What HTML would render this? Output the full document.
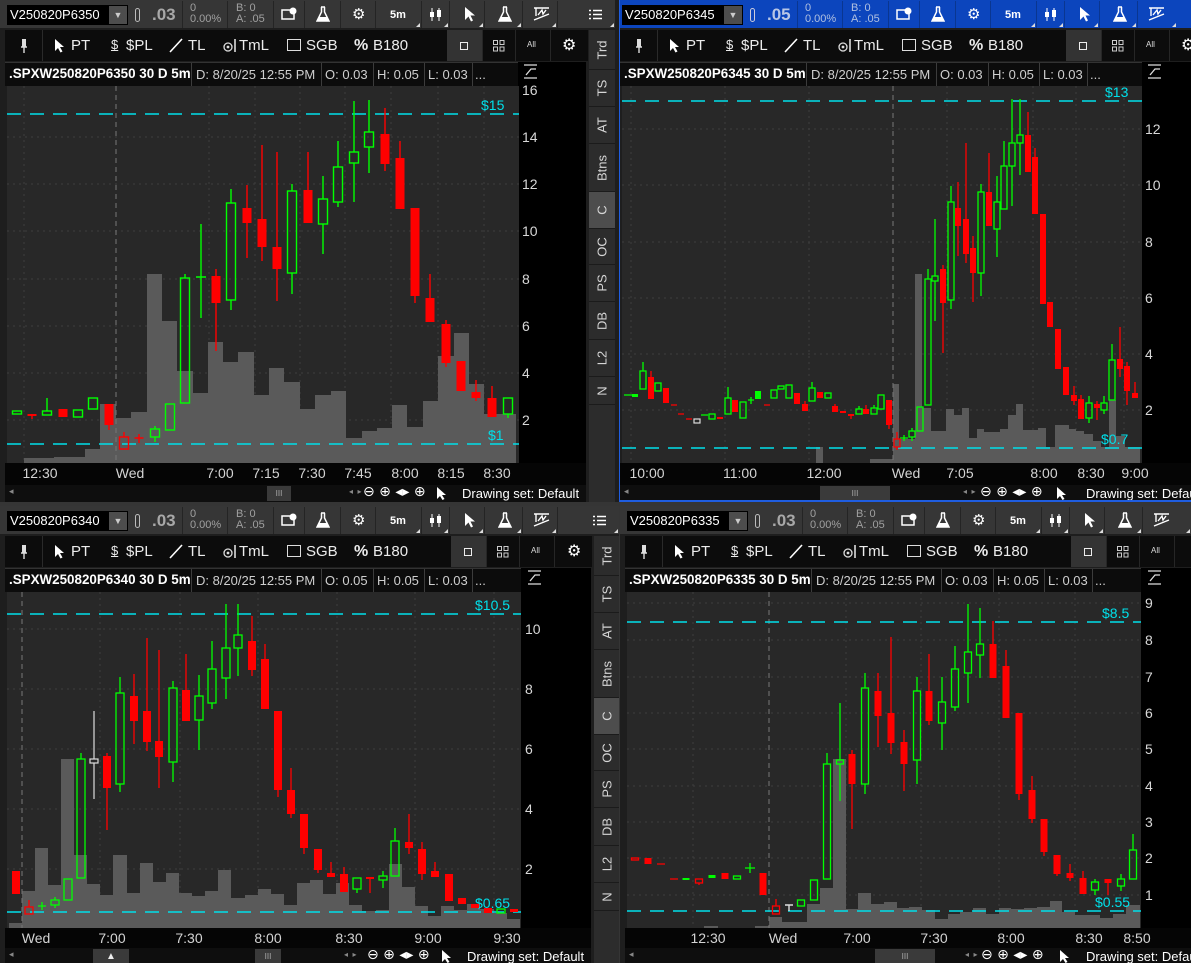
<!DOCTYPE html>
<html><head><meta charset="utf-8">
<style>
*{box-sizing:border-box}
body{margin:0;width:1191px;height:963px;background:#353535;position:relative;overflow:hidden;font-family:"Liberation Sans",sans-serif}
.pn{position:absolute;overflow:hidden}
.r1{position:absolute;left:0;top:0;height:28px;right:0;background:#363636}
.blue .r1{background:#0c45bd}
.cell{position:absolute;top:1px;height:27px;border-left:1px solid #242424}
.blue .cell{border-left-color:#0a3690}
.tri{position:absolute;right:1px;bottom:1px;width:0;height:0;border-left:4px solid transparent;border-bottom:4px solid #ddd}
.sym{position:absolute;left:7px;top:5px;width:121px;height:20px;background:#000;color:#fff;font-size:13px;line-height:20px;padding-left:3px}
.dd{position:absolute;left:102px;top:1px;width:18px;height:18px;background:#4d4d4d;color:#ccc;font-size:9px;text-align:center;line-height:18px}
.big{position:absolute;left:152px;top:5px;color:#a8a8a8;font-weight:bold;font-size:17px}
.blue .big{color:#b8c6e6}
.sm{position:absolute;color:#a0a0a0;font-size:11px;line-height:11px}
.blue .sm{color:#b0c0e0}
.ic{position:absolute;top:6px}
.t5{position:absolute;left:389px;top:8px;color:#fff;font-size:11px;font-weight:bold}
.r2{position:absolute;left:5px;top:30px;height:31px;background:#0c0c0c;color:#ececec;font-size:15px}
.r2 .tx{position:absolute;top:7px}
.hd{position:absolute;left:5px;top:62px;height:24px;background:#0c0c0c;color:#cfcfcf;font-size:13px;border-top:1px solid #333}
.hd span{position:absolute;top:4px;white-space:nowrap}
.hd .b{color:#fff;font-weight:bold;font-size:13.4px;top:3px}
.vd{position:absolute;top:0;width:1px;height:24px;background:#3c3c3c}
.pa{position:absolute;top:86px;background:#000}
.ta{position:absolute;background:#050505;color:#d4d4d4;font-size:14px}
.ta span{position:absolute;top:2px;transform:translateX(-50%);white-space:nowrap}
.sc{position:absolute;background:#0e0e0e;color:#fff;font-size:13px}
.th{position:absolute;top:1px;height:15px;background:#3a3a3a;color:#aaa;font-size:8px;text-align:center;line-height:15px}
.sb{position:absolute;background:#2c2c2c}
.tab{position:absolute;left:0;width:100%;border-bottom:1px solid #1b1b1b;color:#d6d6d6;font-size:13px}
.tab span{position:absolute;left:50%;top:50%;transform:translate(-50%,-50%) rotate(-90deg);white-space:nowrap}
.tab.on{background:#4d4d4d}
.dj{font-family:"DejaVu Sans",sans-serif}
</style></head><body>

<!-- ============ PANEL TOP-LEFT ============ -->
<div class="pn" style="left:0;top:0;width:615px;height:502px;background:#1e1e1e">
 <div class="r1">
  <div class="sym">V250820P6350<div class="dd">▼</div></div>
  <svg class="ic" style="left:134px;top:8px" width="8" height="14"><rect x="1.5" y="0.5" width="4" height="13" rx="2" fill="none" stroke="#bbb"/></svg>
  <div class="big">.03</div>
  <div class="cell" style="left:182px;width:45px"><div class="sm" style="left:7px;top:2px">0<br>0.00%</div></div>
  <div class="cell" style="left:227px;width:46px"><div class="sm" style="left:8px;top:2px">B: 0<br>A: .05</div></div>
  <div class="cell" style="left:273px;width:31px"><svg class="ic" style="left:7px" width="16" height="14"><rect x="1" y="3" width="12" height="9" fill="none" stroke="#fff" stroke-width="1.5"/><circle cx="12" cy="4" r="3.5" fill="#fff"/></svg></div>
  <div class="cell" style="left:304px;width:36px"><svg class="ic" style="left:11px;top:5px" width="14" height="17"><path d="M5 1H9M5.5 1V6L1 15H13L8.5 6V1" fill="none" stroke="#fff" stroke-width="1.5"/><path d="M3 11H11L13 15H1Z" fill="#fff"/></svg></div>
  <div class="cell" style="left:340px;width:35px"><span class="ic dj" style="left:11px;top:4px;color:#fff;font-size:15px">⚙</span></div>
  <div class="cell" style="left:375px;width:46px"><span class="t5" style="left:14px">5m</span><div class="tri"></div></div>
  <div class="cell" style="left:421px;width:28px"><svg class="ic" style="left:6px" width="16" height="15"><path d="M4 1V14M11 1V14" stroke="#fff"/><rect x="2" y="5" width="4" height="5" fill="#fff"/><rect x="9" y="3" width="4" height="7" fill="#fff"/></svg><div class="tri"></div></div>
  <div class="cell" style="left:449px;width:35px"><svg class="ic" style="left:14px;top:5px" width="12" height="16"><path d="M1 1V14L4.5 10.5L7 15.5L9 14.5L6.5 9.5H11Z" fill="#fff"/></svg><div class="tri"></div></div>
  <div class="cell" style="left:484px;width:38px"><svg class="ic" style="left:13px;top:5px" width="14" height="17"><path d="M5 1H9M5.5 1V6L1 15H13L8.5 6V1" fill="none" stroke="#fff" stroke-width="1.5"/><path d="M3 11H11L13 15H1Z" fill="#fff"/></svg><div class="tri"></div></div>
  <div class="cell" style="left:522px;width:35px"><svg class="ic" style="left:10px;top:5px" width="18" height="16"><path d="M1 2H16M3 2V10M1 14L16 8M5 9L9 4L10 8L13 4" fill="none" stroke="#fff" stroke-width="1.4"/></svg><div class="tri"></div></div>
  <div class="cell" style="left:557px;width:58px"><svg class="ic" style="left:31px;top:8px" width="14" height="11"><path d="M4 1.5H13M4 5.5H13M4 9.5H13" stroke="#fff" stroke-width="1.4"/><path d="M0 1.5H2M0 5.5H2M0 9.5H2" stroke="#fff" stroke-width="1.4"/></svg><div class="tri"></div></div>
 </div>
 <div class="r2" style="width:583px">
  <div class="vd" style="left:37px;height:31px;background:#2a2a2a"></div>
  <svg style="position:absolute;left:15px;top:8px" width="8" height="16"><rect x="2" y="1" width="4" height="8" fill="#ddd"/><path d="M1 9H7M4 9V15" stroke="#ddd" stroke-width="1.4"/></svg>
  <svg style="position:absolute;left:49px;top:8px" width="11" height="15"><path d="M1 1V13L4 10L6.5 14.5L8.5 13.5L6 9H10Z" fill="#fff"/></svg><span class="tx" style="left:66px">PT</span>
  <span class="tx" style="left:106px;font-size:13px;text-decoration:underline">$</span><span class="tx" style="left:121px">$PL</span>
  <svg style="position:absolute;left:164px;top:8px" width="14" height="15"><path d="M1 14L13 1" stroke="#fff" stroke-width="1.6"/></svg><span class="tx" style="left:183px">TL</span>
  <svg style="position:absolute;left:218px;top:8px" width="14" height="15"><circle cx="5" cy="9" r="4" fill="none" stroke="#ddd" stroke-width="1.3"/><circle cx="5" cy="9" r="1.4" fill="#ddd"/><path d="M12 1V14" stroke="#ddd" stroke-width="1.6"/></svg><span class="tx" style="left:234px">TmL</span>
  <svg style="position:absolute;left:282px;top:9px" width="14" height="12"><rect x="0.5" y="0.5" width="13" height="11" fill="none" stroke="#ddd"/></svg><span class="tx" style="left:301px">SGB</span>
  <span class="tx" style="left:349px;font-weight:bold;font-size:16px">%</span><span class="tx" style="left:368px">B180</span>
  <div style="position:absolute;left:442px;top:0;width:35px;height:31px;background:#333"><div style="position:absolute;left:13px;top:12px;width:8px;height:8px;border:1px solid #eee"></div></div>
  <div class="vd" style="left:477px;height:31px;background:#262626"></div>
  <svg style="position:absolute;left:488px;top:10px" width="12" height="12"><rect x="0.5" y="0.5" width="4" height="4" fill="none" stroke="#ccc"/><rect x="7" y="0.5" width="4" height="4" fill="none" stroke="#ccc"/><rect x="0.5" y="7" width="4" height="4" fill="none" stroke="#ccc"/><rect x="7" y="7" width="4" height="4" fill="none" stroke="#ccc"/></svg>
  <div class="vd" style="left:510px;height:31px;background:#262626"></div>
  <span style="position:absolute;left:522px;top:10px;font-size:8px;color:#ddd">All</span>
  <div class="vd" style="left:545px;height:31px;background:#262626"></div>
  <span class="dj" style="position:absolute;left:557px;top:5px;font-size:16px;color:#fff">⚙</span>
 </div>
 <div class="hd" style="width:513px">
  <span class="b" style="left:4px">.SPXW250820P6350 30 D 5m</span><div class="vd" style="left:186px"></div>
  <span style="left:191px">D: 8/20/25 12:55 PM</span><div class="vd" style="left:316px"></div>
  <span style="left:320px">O: 0.03</span><div class="vd" style="left:368px"></div>
  <span style="left:372px">H: 0.05</span><div class="vd" style="left:419px"></div>
  <span style="left:423px">L: 0.03</span><div class="vd" style="left:467px"></div>
  <span style="left:470px">...</span>
 </div>
 <div style="position:absolute;left:518px;top:62px;width:68px;height:24px;background:#000"><svg style="position:absolute;left:5px;top:2px" width="16" height="16"><path d="M1 14H14M1 1H14M3 11L8 5L13 5" fill="none" stroke="#ddd" stroke-width="1.3"/></svg></div>
 <div class="pa" style="left:519px;width:67px;height:377px"></div>
 <div class="ta" style="left:5px;top:463px;width:581px;height:22px"><span style="left:35px">12:30</span><span style="left:125px">Wed</span><span style="left:215px">7:00</span><span style="left:261px">7:15</span><span style="left:307px">7:30</span><span style="left:353px">7:45</span><span style="left:400px">8:00</span><span style="left:446px">8:15</span><span style="left:492px">8:30</span></div>
 <div class="sc" style="left:5px;top:485px;width:581px;height:17px">
  <span style="position:absolute;left:4px;top:1px;color:#888;font-size:9px">◂</span>
  <div class="th" style="left:262px;width:24px">III</div>
  <span style="position:absolute;left:344px;top:2px;color:#888;font-size:8px">◂&nbsp;&nbsp;▸</span>
  <span class="dj" style="position:absolute;left:358px;top:-1px;font-size:14px">⊖ ⊕ ◂▸ ⊕</span>
  <svg style="position:absolute;left:431px;top:1px" width="11" height="14"><path d="M1 1V13L4 10L6.5 14L8.5 13L6 9H10Z" fill="#fff"/></svg>
  <span style="position:absolute;left:457px;top:1px">Drawing set: Default</span>
 </div>
 <div class="sb" style="left:589px;top:30px;width:26px;height:472px">
  <div class="tab" style="top:0;height:40px"><span>Trd</span></div>
  <div class="tab" style="top:40px;height:37px"><span>TS</span></div>
  <div class="tab" style="top:77px;height:37px"><span>AT</span></div>
  <div class="tab" style="top:114px;height:48px"><span>Btns</span></div>
  <div class="tab on" style="top:162px;height:37px"><span>C</span></div>
  <div class="tab" style="top:199px;height:36px"><span>OC</span></div>
  <div class="tab" style="top:235px;height:37px"><span>PS</span></div>
  <div class="tab" style="top:272px;height:38px"><span>DB</span></div>
  <div class="tab" style="top:310px;height:37px"><span>L2</span></div>
  <div class="tab" style="top:347px;height:28px"><span>N</span></div>
 </div>
</div>

<!-- ============ PANEL TOP-RIGHT ============ -->
<div class="pn blue" style="left:615px;top:0;width:576px;height:502px;background:#1e1e1e">
 <div class="r1" style="left:4px">
  <div class="sym" style="left:3px">V250820P6345<div class="dd">▼</div></div>
  <svg class="ic" style="left:130px;top:8px" width="8" height="14"><rect x="1.5" y="0.5" width="4" height="13" rx="2" fill="none" stroke="#ccd"/></svg>
  <div class="big" style="left:148px">.05</div>
  <div class="cell" style="left:178px;width:45px"><div class="sm" style="left:7px;top:2px">0<br>0.00%</div></div>
  <div class="cell" style="left:223px;width:46px"><div class="sm" style="left:8px;top:2px">B: 0<br>A: .05</div></div>
  <div class="cell" style="left:269px;width:31px"><svg class="ic" style="left:7px" width="16" height="14"><rect x="1" y="3" width="12" height="9" fill="none" stroke="#fff" stroke-width="1.5"/><circle cx="12" cy="4" r="3.5" fill="#fff"/></svg></div>
  <div class="cell" style="left:300px;width:36px"><svg class="ic" style="left:11px;top:5px" width="14" height="17"><path d="M5 1H9M5.5 1V6L1 15H13L8.5 6V1" fill="none" stroke="#fff" stroke-width="1.5"/><path d="M3 11H11L13 15H1Z" fill="#fff"/></svg></div>
  <div class="cell" style="left:336px;width:35px"><span class="ic dj" style="left:11px;top:4px;color:#fff;font-size:15px">⚙</span></div>
  <div class="cell" style="left:371px;width:46px"><span class="t5" style="left:14px">5m</span><div class="tri"></div></div>
  <div class="cell" style="left:417px;width:28px"><svg class="ic" style="left:6px" width="16" height="15"><path d="M4 1V14M11 1V14" stroke="#fff"/><rect x="2" y="5" width="4" height="5" fill="#fff"/><rect x="9" y="3" width="4" height="7" fill="#fff"/></svg><div class="tri"></div></div>
  <div class="cell" style="left:445px;width:35px"><svg class="ic" style="left:14px;top:5px" width="12" height="16"><path d="M1 1V14L4.5 10.5L7 15.5L9 14.5L6.5 9.5H11Z" fill="#fff"/></svg><div class="tri"></div></div>
  <div class="cell" style="left:480px;width:38px"><svg class="ic" style="left:13px;top:5px" width="14" height="17"><path d="M5 1H9M5.5 1V6L1 15H13L8.5 6V1" fill="none" stroke="#fff" stroke-width="1.5"/><path d="M3 11H11L13 15H1Z" fill="#fff"/></svg><div class="tri"></div></div>
  <div class="cell" style="left:518px;width:40px"><svg class="ic" style="left:10px;top:5px" width="18" height="16"><path d="M1 2H16M3 2V10M1 14L16 8M5 9L9 4L10 8L13 4" fill="none" stroke="#fff" stroke-width="1.4"/></svg><div class="tri"></div></div>
 </div>
 <div class="r2" style="left:5px;width:571px">
  <div class="vd" style="left:37px;height:31px;background:#2a2a2a"></div>
  <svg style="position:absolute;left:15px;top:8px" width="8" height="16"><rect x="2" y="1" width="4" height="8" fill="#ddd"/><path d="M1 9H7M4 9V15" stroke="#ddd" stroke-width="1.4"/></svg>
  <svg style="position:absolute;left:49px;top:8px" width="11" height="15"><path d="M1 1V13L4 10L6.5 14.5L8.5 13.5L6 9H10Z" fill="#fff"/></svg><span class="tx" style="left:66px">PT</span>
  <span class="tx" style="left:106px;font-size:13px;text-decoration:underline">$</span><span class="tx" style="left:121px">$PL</span>
  <svg style="position:absolute;left:164px;top:8px" width="14" height="15"><path d="M1 14L13 1" stroke="#fff" stroke-width="1.6"/></svg><span class="tx" style="left:183px">TL</span>
  <svg style="position:absolute;left:218px;top:8px" width="14" height="15"><circle cx="5" cy="9" r="4" fill="none" stroke="#ddd" stroke-width="1.3"/><circle cx="5" cy="9" r="1.4" fill="#ddd"/><path d="M12 1V14" stroke="#ddd" stroke-width="1.6"/></svg><span class="tx" style="left:234px">TmL</span>
  <svg style="position:absolute;left:282px;top:9px" width="14" height="12"><rect x="0.5" y="0.5" width="13" height="11" fill="none" stroke="#ddd"/></svg><span class="tx" style="left:301px">SGB</span>
  <span class="tx" style="left:349px;font-weight:bold;font-size:16px">%</span><span class="tx" style="left:368px">B180</span>
  <div style="position:absolute;left:446px;top:0;width:35px;height:31px;background:#333"><div style="position:absolute;left:13px;top:12px;width:8px;height:8px;border:1px solid #eee"></div></div>
  <div class="vd" style="left:481px;height:31px;background:#262626"></div>
  <svg style="position:absolute;left:492px;top:10px" width="12" height="12"><rect x="0.5" y="0.5" width="4" height="4" fill="none" stroke="#ccc"/><rect x="7" y="0.5" width="4" height="4" fill="none" stroke="#ccc"/><rect x="0.5" y="7" width="4" height="4" fill="none" stroke="#ccc"/><rect x="7" y="7" width="4" height="4" fill="none" stroke="#ccc"/></svg>
  <div class="vd" style="left:514px;height:31px;background:#262626"></div>
  <span style="position:absolute;left:526px;top:10px;font-size:8px;color:#ddd">All</span>
  <div class="vd" style="left:549px;height:31px;background:#262626"></div>
  <span class="dj" style="position:absolute;left:561px;top:5px;font-size:16px;color:#fff">⚙</span>
 </div>
 <div class="hd" style="width:522px">
  <span class="b" style="left:4px">.SPXW250820P6345 30 D 5m</span><div class="vd" style="left:186px"></div>
  <span style="left:191px">D: 8/20/25 12:55 PM</span><div class="vd" style="left:316px"></div>
  <span style="left:320px">O: 0.03</span><div class="vd" style="left:368px"></div>
  <span style="left:372px">H: 0.05</span><div class="vd" style="left:419px"></div>
  <span style="left:423px">L: 0.03</span><div class="vd" style="left:467px"></div>
  <span style="left:470px">...</span>
 </div>
 <div style="position:absolute;left:527px;top:62px;width:49px;height:24px;background:#000"><svg style="position:absolute;left:5px;top:2px" width="16" height="16"><path d="M1 14H14M1 1H14M3 11L8 5L13 5" fill="none" stroke="#ddd" stroke-width="1.3"/></svg></div>
 <div class="pa" style="left:527px;width:49px;height:377px"></div>
 <div class="ta" style="left:5px;top:463px;width:571px;height:22px"><span style="left:27px">10:00</span><span style="left:120px">11:00</span><span style="left:204px">12:00</span><span style="left:286px">Wed</span><span style="left:340px">7:05</span><span style="left:424px">8:00</span><span style="left:471px">8:30</span><span style="left:515px">9:00</span></div>
 <div class="sc" style="left:5px;top:485px;width:571px;height:15px">
  <span style="position:absolute;left:4px;top:1px;color:#888;font-size:9px">◂</span>
  <div class="th" style="left:200px;width:70px">III</div>
  <span style="position:absolute;left:343px;top:2px;color:#888;font-size:8px">◂&nbsp;&nbsp;▸</span>
  <span class="dj" style="position:absolute;left:360px;top:-1px;font-size:14px">⊖ ⊕ ◂▸ ⊕</span>
  <svg style="position:absolute;left:436px;top:1px" width="11" height="14"><path d="M1 1V13L4 10L6.5 14L8.5 13L6 9H10Z" fill="#fff"/></svg>
  <span style="position:absolute;left:466px;top:1px;white-space:nowrap">Drawing set: Default</span>
 </div>
 <div style="position:absolute;left:4px;top:0;width:1px;height:502px;background:#1f5de0"></div>
 <div style="position:absolute;left:4px;top:500px;width:572px;height:2px;background:#1f5de0"></div>
</div>

<!-- ============ PANEL BOTTOM-LEFT ============ -->
<div class="pn" style="left:0;top:506px;width:619px;height:457px;background:#1e1e1e">
 <div class="r1">
  <div class="sym">V250820P6340<div class="dd">▼</div></div>
  <svg class="ic" style="left:134px;top:8px" width="8" height="14"><rect x="1.5" y="0.5" width="4" height="13" rx="2" fill="none" stroke="#bbb"/></svg>
  <div class="big">.03</div>
  <div class="cell" style="left:182px;width:45px"><div class="sm" style="left:7px;top:2px">0<br>0.00%</div></div>
  <div class="cell" style="left:227px;width:46px"><div class="sm" style="left:8px;top:2px">B: 0<br>A: .05</div></div>
  <div class="cell" style="left:273px;width:31px"><svg class="ic" style="left:7px" width="16" height="14"><rect x="1" y="3" width="12" height="9" fill="none" stroke="#fff" stroke-width="1.5"/><circle cx="12" cy="4" r="3.5" fill="#fff"/></svg></div>
  <div class="cell" style="left:304px;width:36px"><svg class="ic" style="left:11px;top:5px" width="14" height="17"><path d="M5 1H9M5.5 1V6L1 15H13L8.5 6V1" fill="none" stroke="#fff" stroke-width="1.5"/><path d="M3 11H11L13 15H1Z" fill="#fff"/></svg></div>
  <div class="cell" style="left:340px;width:35px"><span class="ic dj" style="left:11px;top:4px;color:#fff;font-size:15px">⚙</span></div>
  <div class="cell" style="left:375px;width:46px"><span class="t5" style="left:14px">5m</span><div class="tri"></div></div>
  <div class="cell" style="left:421px;width:28px"><svg class="ic" style="left:6px" width="16" height="15"><path d="M4 1V14M11 1V14" stroke="#fff"/><rect x="2" y="5" width="4" height="5" fill="#fff"/><rect x="9" y="3" width="4" height="7" fill="#fff"/></svg><div class="tri"></div></div>
  <div class="cell" style="left:449px;width:35px"><svg class="ic" style="left:14px;top:5px" width="12" height="16"><path d="M1 1V14L4.5 10.5L7 15.5L9 14.5L6.5 9.5H11Z" fill="#fff"/></svg><div class="tri"></div></div>
  <div class="cell" style="left:484px;width:38px"><svg class="ic" style="left:13px;top:5px" width="14" height="17"><path d="M5 1H9M5.5 1V6L1 15H13L8.5 6V1" fill="none" stroke="#fff" stroke-width="1.5"/><path d="M3 11H11L13 15H1Z" fill="#fff"/></svg><div class="tri"></div></div>
  <div class="cell" style="left:522px;width:35px"><svg class="ic" style="left:10px;top:5px" width="18" height="16"><path d="M1 2H16M3 2V10M1 14L16 8M5 9L9 4L10 8L13 4" fill="none" stroke="#fff" stroke-width="1.4"/></svg><div class="tri"></div></div>
  <div class="cell" style="left:557px;width:62px"><svg class="ic" style="left:35px;top:8px" width="14" height="11"><path d="M4 1.5H13M4 5.5H13M4 9.5H13" stroke="#fff" stroke-width="1.4"/><path d="M0 1.5H2M0 5.5H2M0 9.5H2" stroke="#fff" stroke-width="1.4"/></svg><div class="tri"></div></div>
 </div>
 <div class="r2" style="width:587px">
  <div class="vd" style="left:37px;height:31px;background:#2a2a2a"></div>
  <svg style="position:absolute;left:15px;top:8px" width="8" height="16"><rect x="2" y="1" width="4" height="8" fill="#ddd"/><path d="M1 9H7M4 9V15" stroke="#ddd" stroke-width="1.4"/></svg>
  <svg style="position:absolute;left:49px;top:8px" width="11" height="15"><path d="M1 1V13L4 10L6.5 14.5L8.5 13.5L6 9H10Z" fill="#fff"/></svg><span class="tx" style="left:66px">PT</span>
  <span class="tx" style="left:106px;font-size:13px;text-decoration:underline">$</span><span class="tx" style="left:121px">$PL</span>
  <svg style="position:absolute;left:164px;top:8px" width="14" height="15"><path d="M1 14L13 1" stroke="#fff" stroke-width="1.6"/></svg><span class="tx" style="left:183px">TL</span>
  <svg style="position:absolute;left:218px;top:8px" width="14" height="15"><circle cx="5" cy="9" r="4" fill="none" stroke="#ddd" stroke-width="1.3"/><circle cx="5" cy="9" r="1.4" fill="#ddd"/><path d="M12 1V14" stroke="#ddd" stroke-width="1.6"/></svg><span class="tx" style="left:234px">TmL</span>
  <svg style="position:absolute;left:282px;top:9px" width="14" height="12"><rect x="0.5" y="0.5" width="13" height="11" fill="none" stroke="#ddd"/></svg><span class="tx" style="left:301px">SGB</span>
  <span class="tx" style="left:349px;font-weight:bold;font-size:16px">%</span><span class="tx" style="left:368px">B180</span>
  <div style="position:absolute;left:446px;top:0;width:35px;height:31px;background:#333"><div style="position:absolute;left:13px;top:12px;width:8px;height:8px;border:1px solid #eee"></div></div>
  <div class="vd" style="left:481px;height:31px;background:#262626"></div>
  <svg style="position:absolute;left:492px;top:10px" width="12" height="12"><rect x="0.5" y="0.5" width="4" height="4" fill="none" stroke="#ccc"/><rect x="7" y="0.5" width="4" height="4" fill="none" stroke="#ccc"/><rect x="0.5" y="7" width="4" height="4" fill="none" stroke="#ccc"/><rect x="7" y="7" width="4" height="4" fill="none" stroke="#ccc"/></svg>
  <div class="vd" style="left:514px;height:31px;background:#262626"></div>
  <span style="position:absolute;left:526px;top:10px;font-size:8px;color:#ddd">All</span>
  <div class="vd" style="left:549px;height:31px;background:#262626"></div>
  <span class="dj" style="position:absolute;left:562px;top:5px;font-size:16px;color:#fff">⚙</span>
 </div>
 <div class="hd" style="width:516px">
  <span class="b" style="left:4px">.SPXW250820P6340 30 D 5m</span><div class="vd" style="left:186px"></div>
  <span style="left:191px">D: 8/20/25 12:55 PM</span><div class="vd" style="left:316px"></div>
  <span style="left:320px">O: 0.05</span><div class="vd" style="left:368px"></div>
  <span style="left:372px">H: 0.05</span><div class="vd" style="left:419px"></div>
  <span style="left:423px">L: 0.03</span><div class="vd" style="left:467px"></div>
  <span style="left:470px">...</span>
 </div>
 <div style="position:absolute;left:521px;top:62px;width:70px;height:24px;background:#000"><svg style="position:absolute;left:6px;top:2px" width="16" height="16"><path d="M1 14H14M1 1H14M3 11L8 5L13 5" fill="none" stroke="#ddd" stroke-width="1.3"/></svg></div>
 <div class="pa" style="left:521px;width:70px;height:336px"></div>
 <div class="ta" style="left:5px;top:422px;width:586px;height:20px"><span style="left:31px">Wed</span><span style="left:107px">7:00</span><span style="left:184px">7:30</span><span style="left:263px">8:00</span><span style="left:344px">8:30</span><span style="left:423px">9:00</span><span style="left:502px">9:30</span></div>
 <div class="sc" style="left:5px;top:442px;width:586px;height:15px">
  <span style="position:absolute;left:4px;top:1px;color:#888;font-size:9px">◂</span>
  <div class="th" style="left:88px;width:36px;font-size:10px;color:#eee">▲</div>
  <div class="th" style="left:250px;width:26px">III</div>
  <span style="position:absolute;left:339px;top:2px;color:#888;font-size:8px">◂&nbsp;&nbsp;▸</span>
  <span class="dj" style="position:absolute;left:362px;top:-1px;font-size:14px">⊖ ⊕ ◂▸ ⊕</span>
  <svg style="position:absolute;left:436px;top:1px" width="11" height="14"><path d="M1 1V13L4 10L6.5 14L8.5 13L6 9H10Z" fill="#fff"/></svg>
  <span style="position:absolute;left:462px;top:1px">Drawing set: Default</span>
 </div>
 <div class="sb" style="left:594px;top:30px;width:25px;height:427px">
  <div class="tab" style="top:0;height:40px"><span>Trd</span></div>
  <div class="tab" style="top:40px;height:37px"><span>TS</span></div>
  <div class="tab" style="top:77px;height:37px"><span>AT</span></div>
  <div class="tab" style="top:114px;height:48px"><span>Btns</span></div>
  <div class="tab on" style="top:162px;height:37px"><span>C</span></div>
  <div class="tab" style="top:199px;height:36px"><span>OC</span></div>
  <div class="tab" style="top:235px;height:37px"><span>PS</span></div>
  <div class="tab" style="top:272px;height:38px"><span>DB</span></div>
  <div class="tab" style="top:310px;height:37px"><span>L2</span></div>
  <div class="tab" style="top:347px;height:28px"><span>N</span></div>
 </div>
</div>

<!-- ============ PANEL BOTTOM-RIGHT ============ -->
<div class="pn" style="left:620px;top:506px;width:571px;height:457px;background:#1e1e1e">
 <div class="r1">
  <div class="sym">V250820P6335<div class="dd">▼</div></div>
  <svg class="ic" style="left:134px;top:8px" width="8" height="14"><rect x="1.5" y="0.5" width="4" height="13" rx="2" fill="none" stroke="#bbb"/></svg>
  <div class="big">.03</div>
  <div class="cell" style="left:182px;width:45px"><div class="sm" style="left:7px;top:2px">0<br>0.00%</div></div>
  <div class="cell" style="left:227px;width:46px"><div class="sm" style="left:8px;top:2px">B: 0<br>A: .05</div></div>
  <div class="cell" style="left:273px;width:31px"><svg class="ic" style="left:7px" width="16" height="14"><rect x="1" y="3" width="12" height="9" fill="none" stroke="#fff" stroke-width="1.5"/><circle cx="12" cy="4" r="3.5" fill="#fff"/></svg></div>
  <div class="cell" style="left:304px;width:36px"><svg class="ic" style="left:11px;top:5px" width="14" height="17"><path d="M5 1H9M5.5 1V6L1 15H13L8.5 6V1" fill="none" stroke="#fff" stroke-width="1.5"/><path d="M3 11H11L13 15H1Z" fill="#fff"/></svg></div>
  <div class="cell" style="left:340px;width:35px"><span class="ic dj" style="left:11px;top:4px;color:#fff;font-size:15px">⚙</span></div>
  <div class="cell" style="left:375px;width:46px"><span class="t5" style="left:14px">5m</span><div class="tri"></div></div>
  <div class="cell" style="left:421px;width:28px"><svg class="ic" style="left:6px" width="16" height="15"><path d="M4 1V14M11 1V14" stroke="#fff"/><rect x="2" y="5" width="4" height="5" fill="#fff"/><rect x="9" y="3" width="4" height="7" fill="#fff"/></svg><div class="tri"></div></div>
  <div class="cell" style="left:449px;width:35px"><svg class="ic" style="left:14px;top:5px" width="12" height="16"><path d="M1 1V14L4.5 10.5L7 15.5L9 14.5L6.5 9.5H11Z" fill="#fff"/></svg><div class="tri"></div></div>
  <div class="cell" style="left:484px;width:38px"><svg class="ic" style="left:13px;top:5px" width="14" height="17"><path d="M5 1H9M5.5 1V6L1 15H13L8.5 6V1" fill="none" stroke="#fff" stroke-width="1.5"/><path d="M3 11H11L13 15H1Z" fill="#fff"/></svg><div class="tri"></div></div>
  <div class="cell" style="left:522px;width:49px"><svg class="ic" style="left:10px;top:5px" width="18" height="16"><path d="M1 2H16M3 2V10M1 14L16 8M5 9L9 4L10 8L13 4" fill="none" stroke="#fff" stroke-width="1.4"/></svg><div class="tri"></div></div>
 </div>
 <div class="r2" style="width:566px">
  <div class="vd" style="left:37px;height:31px;background:#2a2a2a"></div>
  <svg style="position:absolute;left:15px;top:8px" width="8" height="16"><rect x="2" y="1" width="4" height="8" fill="#ddd"/><path d="M1 9H7M4 9V15" stroke="#ddd" stroke-width="1.4"/></svg>
  <svg style="position:absolute;left:49px;top:8px" width="11" height="15"><path d="M1 1V13L4 10L6.5 14.5L8.5 13.5L6 9H10Z" fill="#fff"/></svg><span class="tx" style="left:66px">PT</span>
  <span class="tx" style="left:106px;font-size:13px;text-decoration:underline">$</span><span class="tx" style="left:121px">$PL</span>
  <svg style="position:absolute;left:164px;top:8px" width="14" height="15"><path d="M1 14L13 1" stroke="#fff" stroke-width="1.6"/></svg><span class="tx" style="left:183px">TL</span>
  <svg style="position:absolute;left:218px;top:8px" width="14" height="15"><circle cx="5" cy="9" r="4" fill="none" stroke="#ddd" stroke-width="1.3"/><circle cx="5" cy="9" r="1.4" fill="#ddd"/><path d="M12 1V14" stroke="#ddd" stroke-width="1.6"/></svg><span class="tx" style="left:234px">TmL</span>
  <svg style="position:absolute;left:282px;top:9px" width="14" height="12"><rect x="0.5" y="0.5" width="13" height="11" fill="none" stroke="#ddd"/></svg><span class="tx" style="left:301px">SGB</span>
  <span class="tx" style="left:349px;font-weight:bold;font-size:16px">%</span><span class="tx" style="left:368px">B180</span>
  <div style="position:absolute;left:446px;top:0;width:35px;height:31px;background:#333"><div style="position:absolute;left:13px;top:12px;width:8px;height:8px;border:1px solid #eee"></div></div>
  <div class="vd" style="left:481px;height:31px;background:#262626"></div>
  <svg style="position:absolute;left:492px;top:10px" width="12" height="12"><rect x="0.5" y="0.5" width="4" height="4" fill="none" stroke="#ccc"/><rect x="7" y="0.5" width="4" height="4" fill="none" stroke="#ccc"/><rect x="0.5" y="7" width="4" height="4" fill="none" stroke="#ccc"/><rect x="7" y="7" width="4" height="4" fill="none" stroke="#ccc"/></svg>
  <div class="vd" style="left:514px;height:31px;background:#262626"></div>
  <span style="position:absolute;left:526px;top:10px;font-size:8px;color:#ddd">All</span>
  <div class="vd" style="left:549px;height:31px;background:#262626"></div>
 </div>
 <div class="hd" style="width:516px">
  <span class="b" style="left:4px">.SPXW250820P6335 30 D 5m</span><div class="vd" style="left:186px"></div>
  <span style="left:191px">D: 8/20/25 12:55 PM</span><div class="vd" style="left:316px"></div>
  <span style="left:320px">O: 0.03</span><div class="vd" style="left:368px"></div>
  <span style="left:372px">H: 0.05</span><div class="vd" style="left:419px"></div>
  <span style="left:423px">L: 0.03</span><div class="vd" style="left:467px"></div>
  <span style="left:470px">...</span>
 </div>
 <div style="position:absolute;left:521px;top:62px;width:50px;height:24px;background:#000"><svg style="position:absolute;left:6px;top:2px" width="16" height="16"><path d="M1 14H14M1 1H14M3 11L8 5L13 5" fill="none" stroke="#ddd" stroke-width="1.3"/></svg></div>
 <div class="pa" style="left:521px;width:50px;height:336px"></div>
 <div class="ta" style="left:5px;top:422px;width:566px;height:20px"><span style="left:83px">12:30</span><span style="left:158px">Wed</span><span style="left:232px">7:00</span><span style="left:309px">7:30</span><span style="left:386px">8:00</span><span style="left:464px">8:30</span><span style="left:512px">8:50</span></div>
 <div class="sc" style="left:5px;top:442px;width:566px;height:15px">
  <span style="position:absolute;left:4px;top:1px;color:#888;font-size:9px">◂</span>
  <div class="th" style="left:250px;width:60px">III</div>
  <span style="position:absolute;left:340px;top:2px;color:#888;font-size:8px">◂&nbsp;&nbsp;▸</span>
  <span class="dj" style="position:absolute;left:356px;top:-1px;font-size:14px">⊖ ⊕ ◂▸ ⊕</span>
  <svg style="position:absolute;left:434px;top:1px" width="11" height="14"><path d="M1 1V13L4 10L6.5 14L8.5 13L6 9H10Z" fill="#fff"/></svg>
  <span style="position:absolute;left:461px;top:1px;white-space:nowrap">Drawing set: Default</span>
 </div>
</div>

<!-- ============ CHARTS ============ -->
<svg style="position:absolute;left:0;top:0" width="1191" height="963" font-family="Liberation Sans, sans-serif">
<!-- TL -->
<rect x="7" y="86" width="512" height="377" fill="#282828"/>
<g stroke="#3e3e3e" stroke-dasharray="2,4"><path d="M7 137H519M7 184H519M7 231H519M7 279H519M7 326H519M7 373H519M7 420H519M24 86V463M209 86V463M255 86V463M300 86V463M345 86V463M391 86V463M438 86V463M484 86V463"/></g>
<path d="M24 463V458H54V457H85V449H100V404H116V418H131V412H147V274H162V321H177V371H193V393H208V342H223V362H238V352H254V395H269V368H284V382H300V409H315V395H331V391H346V438H362V431H377V428H392V405H407V427H423V401H438V356H454V333H469V384H484V414H516V463Z" fill="#5a5a5a"/>
<path d="M116 86V463" stroke="#777" stroke-dasharray="5,4"/>
<g stroke="#00e0ea" stroke-width="1.5" stroke-dasharray="14,9"><path d="M7 114H519M7 444H519"/></g>
<g fill="#00e0ea" font-size="14"><text x="481" y="110">$15</text><text x="488" y="440">$1</text></g>
<g fill="#d8d8d8" font-size="14"><text x="522" y="95">16</text><text x="522" y="142">14</text><text x="522" y="189">12</text><text x="522" y="236">10</text><text x="522" y="284">8</text><text x="522" y="331">6</text><text x="522" y="378">4</text><text x="522" y="425">2</text></g>
<g stroke="#00ff00" stroke-width="1.4" fill="none">
<rect x="12.5" y="411" width="9" height="3"/><rect x="42.5" y="411" width="9" height="4"/><rect x="73.5" y="410" width="9" height="7"/><rect x="88.5" y="398" width="9" height="11"/><rect x="150.5" y="429" width="9" height="8"/><rect x="165.5" y="404" width="9" height="26"/><rect x="180.5" y="278" width="9" height="125"/><rect x="226.5" y="203" width="9" height="97"/><rect x="287.5" y="191" width="9" height="82"/><rect x="318.5" y="199" width="9" height="25"/><rect x="333.5" y="167" width="9" height="35"/><rect x="349.5" y="152" width="9" height="11"/><rect x="364.5" y="132" width="9" height="15"/><rect x="503.5" y="398" width="9" height="16"/>
<path d="M47 398V411M155 426V429M155 437V442M185 274V278M196 277H206M201 224V318M231 189V203M231 300V310M292 184V191M292 273V294M323 176V199M323 224V254M338 141V167M338 202V207M354 101V152M354 163V202M369 100V132M369 147V173M508 414V418"/>
</g>
<g stroke="#ff0000" stroke-width="1.4" fill="none"><rect x="119.5" y="437" width="9" height="12"/><path d="M124 432V437M134.5 438H143.5M139 434V443M32 414V419M109 425V430M216 269V351M247 185V258M262 145V261M277 152V301M308 152V223M385 108V171M400 141V209M415 208V303M430 274V322M446 320V367M476 380V401M492 386V417"/></g>
<g fill="#ff0000"><rect x="27.5" y="414" width="9" height="2"/><rect x="58.5" y="409" width="9" height="8"/><rect x="104.5" y="404" width="9" height="21"/><rect x="211.5" y="276" width="9" height="27"/><rect x="242.5" y="208" width="9" height="15"/><rect x="257.5" y="219" width="9" height="28"/><rect x="272.5" y="247" width="9" height="22"/><rect x="303.5" y="190" width="9" height="33"/><rect x="380.5" y="134" width="9" height="30"/><rect x="395.5" y="158" width="9" height="51"/><rect x="410.5" y="208" width="9" height="88"/><rect x="425.5" y="298" width="9" height="24"/><rect x="441.5" y="324" width="9" height="39"/><rect x="456.5" y="361" width="9" height="30"/><rect x="471.5" y="392" width="9" height="6"/><rect x="487.5" y="398" width="9" height="19"/></g>

<!-- TR -->
<rect x="622" y="86" width="520" height="377" fill="#282828"/>
<g stroke="#3e3e3e" stroke-dasharray="2,4"><path d="M622 129H1142M622 185H1142M622 242H1142M622 298H1142M622 354H1142M622 410H1142M631 86V463M725 86V463M809 86V463M947 86V463M1033 86V463M1076 86V463M1124 86V463"/></g>
<path d="M816 463V447H823V463Z M870 463V459H893V384H899V439H915V274H922V408H931V431H946V409H954V415H962V408H969V438H977V429H984V432H1000V429H1008V415H1016V404H1023V430H1038V428H1046V447H1055V425H1069V429H1076V431H1084V434H1093V441H1101V447H1109V400H1116V436H1125V447H1140V463Z" fill="#5a5a5a"/>
<path d="M893 86V463" stroke="#777" stroke-dasharray="5,4"/>
<g stroke="#00e0ea" stroke-width="1.5" stroke-dasharray="14,9"><path d="M622 101H1142M622 448H1142"/></g>
<g fill="#00e0ea" font-size="14"><text x="1105" y="97">$13</text><text x="1101" y="444">$0.7</text></g>
<g fill="#d8d8d8" font-size="14"><text x="1145" y="134">12</text><text x="1145" y="190">10</text><text x="1145" y="247">8</text><text x="1145" y="303">6</text><text x="1145" y="359">4</text><text x="1145" y="415">2</text></g>
<g stroke="#00ff00" stroke-width="1.3" fill="none">
<rect x="640" y="371" width="6" height="18"/><rect x="655" y="383" width="6" height="8"/><rect x="709" y="414" width="6" height="5"/><rect x="725" y="398" width="6" height="16"/><rect x="740" y="402" width="6" height="16"/><rect x="771" y="390" width="6" height="8"/><rect x="778" y="386" width="6" height="3"/><rect x="786" y="385" width="6" height="13"/><rect x="809" y="388" width="6" height="13"/><rect x="825" y="393" width="6" height="5"/><rect x="856" y="409" width="6" height="5"/><rect x="871" y="408" width="6" height="6"/><rect x="878" y="395" width="6" height="14"/><rect x="909" y="431" width="6" height="6"/><rect x="917" y="407" width="6" height="24"/><rect x="925" y="279" width="6" height="126"/><rect x="932" y="276" width="6" height="5"/><rect x="948" y="202" width="6" height="98"/><rect x="978" y="192" width="6" height="81"/><rect x="994" y="202" width="6" height="27"/><rect x="1001" y="166" width="6" height="43"/><rect x="1009" y="143" width="6" height="23"/><rect x="1017" y="135" width="6" height="8"/><rect x="1086" y="403" width="6" height="15"/><rect x="1101" y="403" width="6" height="7"/><rect x="1109" y="360" width="6" height="40"/>
<path d="M643 362V371M728 387V398M812 382V388M859 406V409M874 405V408M912 428V431M912 437V441M928 269V279M935 219V276M935 281V321M951 186V202M951 300V309M981 184V192M981 273V296M997 176V202M997 229V257M1004 141V166M1012 99V143M1012 166V206M1020 99V135M1020 143V175M1089 396V403M1089 418V423M1104 396V403M1104 410V414M1112 344V360M624 395H632M701 415H708M748 400H754M751 397V404M900 438H908M904 435V441"/>
</g>
<g fill="#00ff00"><rect x="632" y="394" width="6" height="3"/><rect x="755" y="391" width="6" height="8"/></g>
<rect x="694" y="419" width="6" height="4" fill="none" stroke="#ddd" stroke-width="1.2"/>
<g stroke="#ff0000" stroke-width="1.3" fill="none"><rect x="894" y="439" width="6" height="8"/><path d="M897 432V439M897 447V450M651 371V399M671 405H677M678 414H684M686 419H692M764 405H770M805 401V411M835 404V412M851 414V419M866 405V414M889 400V429M943 265V353M958 182V256M966 143V263M973 236V302M989 153V226M1028 112V172M1035 148V214M1074 386V405M1081 395V419M1097 401V420M1120 327V377M1127 362V405M1135 382V398"/></g>
<g fill="#ff0000"><rect x="648" y="377" width="6" height="22"/><rect x="663" y="388" width="6" height="15"/><rect x="717" y="417" width="6" height="2"/><rect x="732" y="400" width="6" height="12"/><rect x="794" y="393" width="6" height="11"/><rect x="802" y="404" width="6" height="7"/><rect x="817" y="392" width="6" height="6"/><rect x="832" y="406" width="6" height="6"/><rect x="840" y="411" width="6" height="2"/><rect x="848" y="414" width="6" height="2"/><rect x="863" y="409" width="6" height="5"/><rect x="886" y="400" width="6" height="25"/><rect x="940" y="269" width="6" height="34"/><rect x="955" y="208" width="6" height="18"/><rect x="963" y="219" width="6" height="35"/><rect x="970" y="248" width="6" height="25"/><rect x="986" y="192" width="6" height="34"/><rect x="1025" y="135" width="6" height="37"/><rect x="1032" y="157" width="6" height="57"/><rect x="1040" y="214" width="6" height="90"/><rect x="1047" y="302" width="6" height="25"/><rect x="1055" y="329" width="6" height="40"/><rect x="1063" y="367" width="6" height="28"/><rect x="1071" y="395" width="6" height="6"/><rect x="1078" y="399" width="6" height="20"/><rect x="1094" y="404" width="6" height="4"/><rect x="1117" y="359" width="6" height="10"/><rect x="1124" y="366" width="6" height="25"/><rect x="1132" y="393" width="6" height="5"/></g>

<!-- BL -->
<rect x="7" y="592" width="514" height="336" fill="#282828"/>
<g stroke="#3e3e3e" stroke-dasharray="2,4"><path d="M7 629H521M7 689H521M7 749H521M7 809H521M7 869H521M100 592V928M180 592V928M258 592V928M337 592V928M415 592V928M494 592V928"/></g>
<path d="M9 928V923H22V891H35V848H48V885H61V759H74V855H87V884H100V895H113V855H127V893H140V863H153V882H166V873H179V893H192V896H205V891H218V870H231V898H245V895H258V889H271V894H284V905H297V883H310V880H323V894H336V883H349V905H362V911H376V910H389V864H402V887H415V906H428V916H441V906H454V910H467V904H480V909H494V913H507V919H520V928Z" fill="#5a5a5a"/>
<path d="M22 592V928" stroke="#777" stroke-dasharray="5,4"/>
<g stroke="#00e0ea" stroke-width="1.5" stroke-dasharray="14,9"><path d="M7 614H521M7 912H521"/></g>
<g fill="#00e0ea" font-size="14"><text x="475" y="610">$10.5</text><text x="475" y="908">$0.65</text></g>
<g fill="#d8d8d8" font-size="14"><text x="525" y="634">10</text><text x="525" y="694">8</text><text x="525" y="754">6</text><text x="525" y="814">4</text><text x="525" y="874">2</text></g>
<g stroke="#00ff00" stroke-width="1.3" fill="none">
<rect x="51" y="900" width="8" height="5"/><rect x="64" y="879" width="8" height="21"/><rect x="77" y="759" width="8" height="119"/><rect x="116" y="693" width="8" height="91"/><rect x="169" y="688" width="8" height="74"/><rect x="195" y="696" width="8" height="24"/><rect x="208" y="669" width="8" height="34"/><rect x="222" y="648" width="8" height="30"/><rect x="234" y="635" width="8" height="13"/><rect x="353" y="878" width="8" height="11"/><rect x="379" y="876" width="8" height="4"/><rect x="391" y="841" width="8" height="35"/><rect x="497" y="909" width="8" height="4"/>
<path d="M55 897V900M55 905V908M81 753V759M120 677V693M120 784V792M173 681V688M173 762V782M199 675V696M199 720V750M212 641V669M212 703V709M226 604V648M226 678V699M238 604V635M238 648V676M357 889V893M383 871V876M383 880V888M395 828V841M38 906H46M42 902V910"/>
</g>
<g stroke="#ddd" stroke-width="1.2" fill="none"><rect x="90" y="759" width="8" height="4"/><path d="M94 711V759M94 763V799"/></g>
<g stroke="#ff0000" stroke-width="1.3" fill="none"><rect x="25" y="907" width="8" height="7"/><path d="M29 900V907M107 753V830M134 674V744M147 638V751M159 650V788M186 654V721M252 616V676M265 644V709M278 711V797M291 768V818M304 814V854M318 849V873M331 862V877M344 867V892M370 877V893M409 814V854M422 842V880M435 862V877"/></g>
<g fill="#ff0000"><rect x="12" y="871" width="8" height="23"/><rect x="103" y="756" width="8" height="32"/><rect x="130" y="696" width="8" height="25"/><rect x="143" y="711" width="8" height="31"/><rect x="155" y="741" width="8" height="16"/><rect x="182" y="690" width="8" height="31"/><rect x="248" y="641" width="8" height="29"/><rect x="261" y="659" width="8" height="50"/><rect x="274" y="711" width="8" height="79"/><rect x="287" y="790" width="8" height="24"/><rect x="300" y="814" width="8" height="34"/><rect x="314" y="849" width="8" height="21"/><rect x="327" y="873" width="8" height="4"/><rect x="340" y="874" width="8" height="18"/><rect x="366" y="877" width="8" height="2"/><rect x="405" y="842" width="8" height="6"/><rect x="418" y="849" width="8" height="25"/><rect x="431" y="871" width="8" height="6"/><rect x="445" y="874" width="8" height="27"/><rect x="458" y="898" width="8" height="6"/><rect x="471" y="904" width="8" height="4"/><rect x="484" y="908" width="8" height="5"/><rect x="510" y="909" width="8" height="3"/></g>

<!-- BR -->
<rect x="627" y="592" width="514" height="336" fill="#282828"/>
<g stroke="#3e3e3e" stroke-dasharray="2,4"><path d="M627 603H1141M627 640H1141M627 677H1141M627 713H1141M627 749H1141M627 786H1141M627 822H1141M627 858H1141M627 895H1141M693 592V928M846 592V928M921 592V928M999 592V928M1075 592V928"/></g>
<path d="M704 928V926H718V928Z M755 928V926H769V917H782V922H807V904H820V888H833V759H846V909H858V893H871V904H884V902H897V908H909V907H922V910H935V919H948V914H960V912H973V908H986V914H999V908H1011V909H1024V908H1037V907H1050V901H1062V912H1075V915H1100V918H1113V914H1126V905H1140V928Z" fill="#5a5a5a"/>
<path d="M769 592V928" stroke="#777" stroke-dasharray="5,4"/>
<g stroke="#00e0ea" stroke-width="1.5" stroke-dasharray="14,9"><path d="M627 622H1141M627 911H1141"/></g>
<g fill="#00e0ea" font-size="14"><text x="1102" y="618">$8.5</text><text x="1095" y="907">$0.55</text></g>
<g fill="#d8d8d8" font-size="14"><text x="1145" y="608">9</text><text x="1145" y="645">8</text><text x="1145" y="682">7</text><text x="1145" y="718">6</text><text x="1145" y="754">5</text><text x="1145" y="791">4</text><text x="1145" y="827">3</text><text x="1145" y="863">2</text><text x="1145" y="900">1</text></g>
<g stroke="#00ff00" stroke-width="1.3" fill="none">
<rect x="733.5" y="876" width="7" height="3"/><rect x="797.5" y="900" width="7" height="6"/><rect x="810.5" y="880" width="7" height="20"/><rect x="823.5" y="764" width="7" height="115"/><rect x="836.5" y="760" width="7" height="4"/><rect x="861.5" y="688" width="7" height="96"/><rect x="913.5" y="691" width="7" height="69"/><rect x="938.5" y="702" width="7" height="21"/><rect x="951.5" y="669" width="7" height="38"/><rect x="964.5" y="652" width="7" height="21"/><rect x="976.5" y="644" width="7" height="11"/><rect x="1091.5" y="882" width="7" height="8"/><rect x="1117.5" y="879" width="7" height="7"/><rect x="1129.5" y="850" width="7" height="29"/>
<path d="M827 753V764M840 703V760M840 764V801M865 673V688M865 784V794M917 677V691M917 760V784M942 677V702M942 723V750M955 646V669M955 707V711M968 604V652M968 673V703M980 608V644M980 655V678M1095 879V882M1095 890V895M1121 874V879M1121 886V891M1133 834V850M745 868H755M750 863V873"/>
</g>
<g fill="#00ff00"><rect x="682.5" y="878" width="7" height="2"/><rect x="708.5" y="875" width="7" height="3"/></g>
<path d="M785 905H793M789 905V911" stroke="#ddd" stroke-width="1.4"/>
<g stroke="#ff0000" stroke-width="1.3" fill="none"><rect x="631.5" y="858" width="7" height="2"/><rect x="695.5" y="879" width="7" height="4"/><rect x="772.5" y="906" width="7" height="8"/><path d="M699 883V885M776 899V906M657 864H665M670 879H678M852 750V829M878 673V747M891 637V754M904 730V791M929 654V725M993 621V678M1006 650V718M1019 713V800M1032 776V823M1044 819V856M1057 855V876M1070 864V881M1083 871V894M1108 879V895"/></g>
<g fill="#ff0000"><rect x="644.5" y="858" width="7" height="6"/><rect x="721.5" y="873" width="7" height="6"/><rect x="759.5" y="873" width="7" height="22"/><rect x="848.5" y="754" width="7" height="30"/><rect x="874.5" y="691" width="7" height="25"/><rect x="887.5" y="713" width="7" height="30"/><rect x="900.5" y="742" width="7" height="22"/><rect x="925.5" y="691" width="7" height="30"/><rect x="989.5" y="644" width="7" height="34"/><rect x="1002.5" y="666" width="7" height="52"/><rect x="1015.5" y="713" width="7" height="81"/><rect x="1028.5" y="790" width="7" height="29"/><rect x="1040.5" y="819" width="7" height="33"/><rect x="1053.5" y="855" width="7" height="19"/><rect x="1066.5" y="873" width="7" height="5"/><rect x="1079.5" y="878" width="7" height="16"/><rect x="1104.5" y="879" width="7" height="4"/></g>
</svg>
</body></html>
